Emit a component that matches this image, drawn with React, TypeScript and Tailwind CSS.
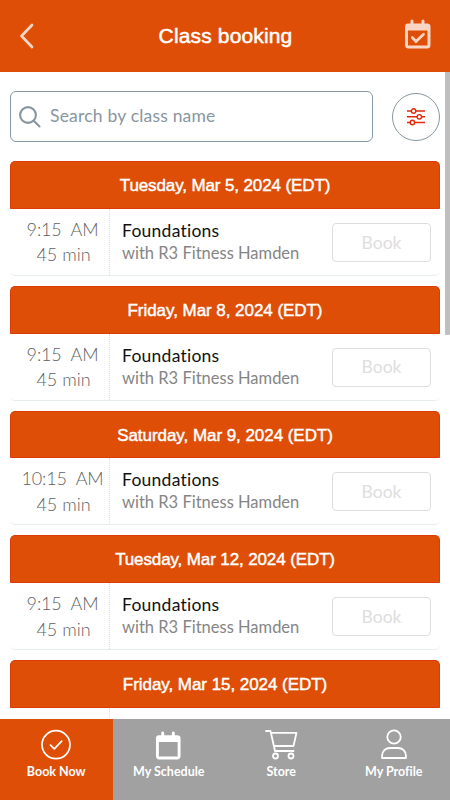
import React, { useState } from 'react';

const classes = [
    { id: 1, date: 'Tuesday, Mar 5, 2024 (EDT)', time: '9:15', dateStyle: 'tracking-[-0.12px]' },
    { id: 2, date: 'Friday, Mar 8, 2024 (EDT)', time: '9:15', dateStyle: 'tracking-[-0.05px]' },
    { id: 3, date: 'Saturday, Mar 9, 2024 (EDT)', time: '10:15', dateStyle: 'tracking-[-0.05px]' },
    { id: 4, date: 'Tuesday, Mar 12, 2024 (EDT)', time: '9:15', dateStyle: 'tracking-[-0.12px]' },
    { id: 5, date: 'Friday, Mar 15, 2024 (EDT)', time: '', dateStyle: 'tracking-[-0.05px]' },
];

const BookIcon = () => (
    <svg width="32" height="32" viewBox="0 0 32 32" fill="none" stroke="white" strokeWidth="1.7" strokeLinecap="round" strokeLinejoin="round">
        <circle cx="16" cy="15.7" r="14" />
        <path d="M10.5 16.2 14.3 19.9 21.7 12.2" />
    </svg>
);

const CalendarIcon = ({ checked = false, size = 28 }: { checked?: boolean; size?: number }) => (
    <svg width={size} height={size * 30 / 28} viewBox="0 0 28 30">
        <path fillRule="evenodd" fill="currentColor" d="M4 4.5H6.5V2Q6.5.5 8 .5T9.5 2V4.5H17.5V2Q17.5.5 19 .5T20.5 2V4.5H23Q26.5 4.5 26.5 7.5V26Q26.5 29.5 23 29.5H4.5Q1 29.5 1 26V7.5Q1 4.5 4 4.5ZM4 11.5V26.5H23.5V11.5Z" />
        {checked && <path d="M8.3 18.5 12 22.5 19.5 15.3" fill="none" stroke="currentColor" strokeWidth="2.7" strokeLinecap="round" />}
    </svg>
);

const CartIcon = () => (
    <svg width="34" height="32" viewBox="0 0 34 32" fill="none" stroke="white" strokeWidth="1.8" strokeLinecap="round" strokeLinejoin="round">
        <path d="M2 2H6.5L11 22H29.5M7 3.8H32.5L29.5 17H10" />
        <circle cx="11.5" cy="27" r="2.5" />
        <circle cx="27" cy="27" r="2.5" />
    </svg>
);

const ProfileIcon = () => (
    <svg width="30" height="32" viewBox="0 0 30 32" fill="none" stroke="white" strokeWidth="1.8" strokeLinejoin="round">
        <circle cx="15" cy="8" r="6.7" />
        <path d="M3 29H27V27C27 22 23.5 19 19 19H11C6.5 19 3 22 3 27Z" />
    </svg>
);

const tabs = [
    { name: 'Book Now', icon: <BookIcon /> },
    { name: 'My Schedule', icon: <div className="pt-[2px]"><CalendarIcon size={27} /></div> },
    { name: 'Store', icon: <CartIcon /> },
    { name: 'My Profile', icon: <ProfileIcon /> },
];

export default function App() {
    const [active, setActive] = useState('Book Now');
    const [search, setSearch] = useState('');

    return (
        <div className="w-[450px] h-[800px] flex flex-col overflow-hidden bg-white font-['Lato',sans-serif] [font-variant-ligatures:none]">
            {/* Header */}
            <header className="h-[72px] shrink-0 bg-[#de4e07] flex items-center justify-between pl-[19px] pr-[18px] text-[#fad5c4]">
                <button className="w-7">
                    <svg width="16" height="26" viewBox="0 0 16 26" fill="none" stroke="currentColor" strokeWidth="2.7" strokeLinecap="round" strokeLinejoin="round">
                        <path d="M13 2 2.5 13 13 24" />
                    </svg>
                </button>
                <h1 className="font-['Liberation_Sans',sans-serif] text-[21px] tracking-[0.15px] text-white [-webkit-text-stroke:0.5px_white]">Class booking</h1>
                <button className="w-7 -mt-1"><CalendarIcon checked /></button>
            </header>

            <div className="flex flex-1 min-h-0">
                <main className="w-[445px] shrink-0 overflow-hidden pl-[10px] pr-[5px] pt-[19px]">
                    {/* Search */}
                    <div className="flex items-center justify-between">
                        <label className="w-[363px] h-[51px] border border-[#8798a1] rounded-[6px] flex items-center pl-[8px]">
                            <svg width="22" height="22" viewBox="0 0 22 22" fill="none" stroke="#87969f" strokeWidth="2.1" strokeLinecap="round">
                                <circle cx="9" cy="9" r="7.9" />
                                <path d="M14.7 14.7 20.5 20.5" />
                            </svg>
                            <input value={search} onChange={(e) => setSearch(e.target.value)} placeholder="Search by class name"
                                className="ml-[9px] flex-1 min-w-0 outline-none text-[17.5px] tracking-[0.2px] placeholder:text-[#87969f]" />
                        </label>
                        <button className="size-[48px] rounded-full border border-[#8798a1] flex items-center justify-center">
                            <svg width="20" height="18" viewBox="0 0 20 18" fill="none" stroke="#e12b0b" strokeWidth="1.4">
                                <path d="M1 3H5.3M10 3H19M1 8.8H11M15.7 8.8H19M1 14.5H4M8.7 14.5H19" />
                                <circle cx="7.6" cy="3" r="2.2" />
                                <circle cx="13.3" cy="8.8" r="2.2" />
                                <circle cx="6.4" cy="14.5" r="2.2" />
                            </svg>
                        </button>
                    </div>

                    {/* Class list */}
                    <div className="pt-[19px] flex flex-col gap-[10px] w-[430px]">
                        {classes.map((c) => (
                            <section key={c.id} className="h-[114.75px] shrink-0 rounded-[5px] overflow-hidden border-b border-[#e8edee]">
                                <h2 className={`h-[47.75px] pt-[2px] bg-[#de4e07] border border-[#dc3a06] rounded-t-[4px] flex items-center justify-center font-['Liberation_Sans',sans-serif] text-[17px] text-white [-webkit-text-stroke:0.45px_white] ${c.dateStyle}`}>
                                    {c.date}
                                </h2>
                                <div className="flex h-[66px]">
                                    <div className="w-[100px] pl-[6px] pt-[8px] border-r border-dotted border-[#e0e0e0] text-center text-[18px] leading-[25.5px] font-light text-[#5f5f5f]">
                                        {c.time && <div className="whitespace-pre tracking-[-0.15px]">{c.time}  AM</div>}
                                        {c.time && <div className="pl-[2px]">45 min</div>}
                                    </div>
                                    {c.time && (
                                        <>
                                            <div className="flex-1 pl-[12px] pt-[11px]">
                                                <div className="text-[17.5px] leading-[22px] tracking-[0.25px] text-[#111111]">Foundations</div>
                                                <div className="text-[16.5px] leading-[22px] text-[#858585] whitespace-nowrap">with R3 Fitness Hamden</div>
                                            </div>
                                            <button disabled className="w-[99px] h-[39px] mt-[14px] mr-[9px] pt-px border border-[#dddddd] rounded-[4px] text-[17.5px] text-[#dedede]">Book</button>
                                        </>
                                    )}
                                </div>
                            </section>
                        ))}
                    </div>
                </main>
                {/* Scroll thumb */}
                <div className="w-[5px] h-[263px] bg-[#bfbfbf] rounded-b-[1px]" />
            </div>

            {/* Bottom tabs */}
            <nav className="h-[81px] shrink-0 grid grid-cols-4">
                {tabs.map((t) => (
                    <button key={t.name} onClick={() => setActive(t.name)}
                        className={`flex flex-col items-center pt-[10px] text-white text-[12.5px] font-bold ${active === t.name ? 'bg-[#de4e07]' : 'bg-[#a1a1a1]'}`}>
                        <div className="h-[33px]">{t.icon}</div>
                        <span className="leading-[20px]">{t.name}</span>
                    </button>
                ))}
            </nav>
        </div>
    );
}
